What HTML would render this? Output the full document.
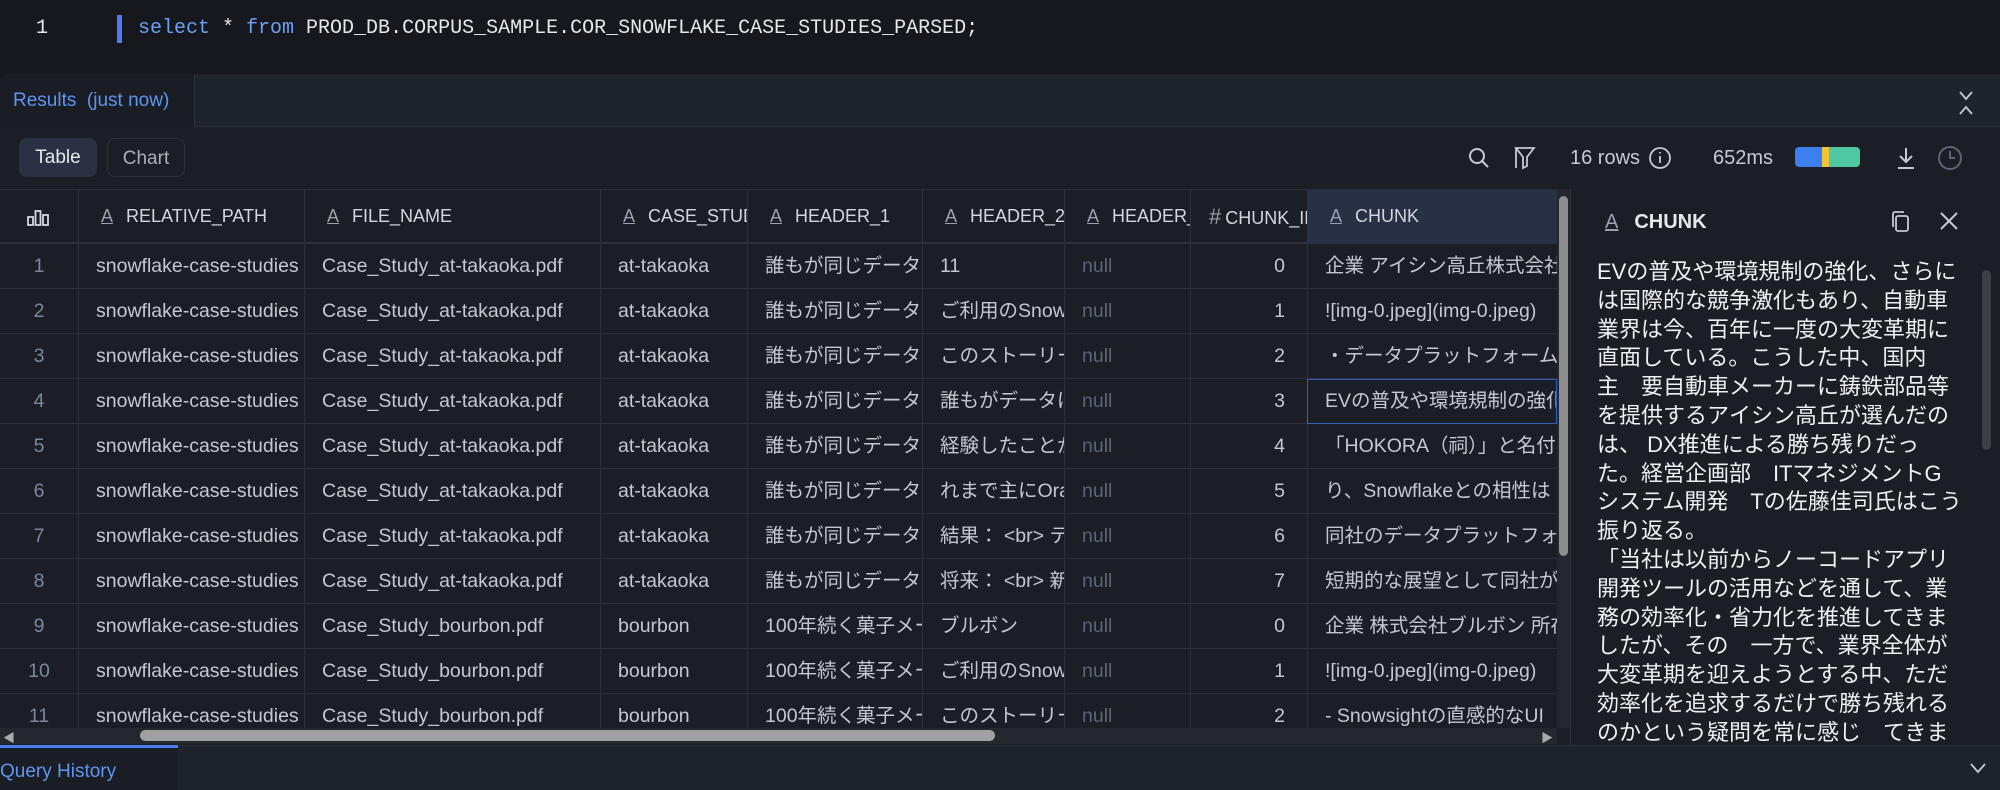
<!DOCTYPE html>
<html><head><meta charset="utf-8">
<style>
*{margin:0;padding:0;box-sizing:border-box}
body{width:2000px;height:790px;overflow:hidden;background:#16181d;font-family:"Liberation Sans","Noto Sans CJK JP",sans-serif;color:#c6cad3;position:relative}
.abs{position:absolute}
.code{left:138px;top:14px;font-family:"Liberation Mono",monospace;font-size:20px;line-height:30px;color:#e6e8ec;white-space:pre}
.kw{color:#6aa0f5}
.panel{left:0;top:74px;width:2000px;height:716px;background:#1b1e25;border-top:1px solid #2a2f3a;border-top-left-radius:10px}
.tabbar{left:0;top:74px;width:2000px;height:53px;background:#1f232b;border-bottom:1px solid #2c313c;border-top-left-radius:10px}
.tab{left:0;top:74px;width:195px;height:53px;background:#1a1d24;border-right:1px solid #2c313c;color:#5e95f2;font-size:19px;line-height:53px;padding-left:13px;border-top-left-radius:10px}
.btn{top:138px;height:39px;border-radius:8px;font-size:19px;line-height:39px;text-align:center}
.hdr{top:189px;height:55px;background:#1b1e25;border-top:1px solid #2c313c;border-bottom:2px solid #2c313c}
.hc{position:absolute;top:189px;height:55px;line-height:55px;font-size:18px;color:#d4d7de;white-space:nowrap;overflow:hidden;border-left:1px solid #2c313c;padding-left:22px}
.ai{display:inline-block;color:#9aa0ad;font-size:18px;text-decoration:underline;margin-right:13px}
.cell{position:absolute;height:45px;line-height:45px;font-size:19.5px;white-space:nowrap;overflow:hidden;border-left:1px solid #2c313c;border-bottom:1px solid #2c313c;padding-left:17px;color:#c3c8d2}
.rn{text-align:center;padding-left:0;color:#7a86a3;border-left:none}
.nl{color:#5c637a}
.num{text-align:right;padding-right:22px;padding-left:0}
.detail{left:1570px;top:189px;width:430px;height:556px;background:#1b1e25;border-left:1px solid #2c313c}
.dtext{left:1597px;top:258px;width:370px;font-size:22px;line-height:28.8px;color:#eef0f3;white-space:nowrap}
.qh{left:0;top:745px;width:2000px;height:45px;background:#1e222a;border-top:1px solid #2c313c}
</style></head><body>
<div class="abs" style="left:36px;top:14px;font-family:'Liberation Mono',monospace;font-size:20px;line-height:30px;color:#e6e8ec">1</div>
<div class="abs" style="left:117px;top:15px;width:5px;height:28px;background:#4a7df0"></div>
<div class="abs code"><span class="kw">select</span> * <span class="kw">from</span> PROD_DB.CORPUS_SAMPLE.COR_SNOWFLAKE_CASE_STUDIES_PARSED;</div>

<div class="abs panel"></div>
<div class="abs tabbar"></div>
<div class="abs tab">Results&nbsp; (just now)</div>
<svg class="abs" style="left:1956px;top:90px" width="20" height="26" viewBox="0 0 20 26" fill="none" stroke="#c6cad3" stroke-width="1.8"><path d="M4 2l6 7 6-7M4 24l6-7 6 7"/></svg>

<div class="abs btn" style="left:19px;width:78px;background:#2a3142;color:#e6e8ec">Table</div>
<div class="abs btn" style="left:107px;width:78px;border:1px solid #2c313c;color:#a9afbb">Chart</div>

<svg class="abs" style="left:1466px;top:145px" width="26" height="26" viewBox="0 0 26 26" fill="none" stroke="#c6cad3" stroke-width="2"><circle cx="11" cy="11" r="7"/><path d="M16 16l6 6"/></svg>
<svg class="abs" style="left:1512px;top:145px" width="26" height="26" viewBox="0 0 26 26" fill="none" stroke="#c6cad3" stroke-width="1.8"><path d="M4 3h18l-7 9v9l-4 2V12z"/><path d="M4 3v20"/></svg>
<div class="abs" style="left:1570px;top:145px;font-size:20px;line-height:26px;color:#c6cad3">16 rows</div>
<svg class="abs" style="left:1647px;top:145px" width="26" height="26" viewBox="0 0 26 26" fill="none" stroke="#c6cad3" stroke-width="1.8"><circle cx="13" cy="13" r="10"/><path d="M13 11v7M13 7v1.5"/></svg>
<div class="abs" style="left:1713px;top:145px;font-size:20px;line-height:26px;color:#c6cad3">652ms</div>
<div class="abs" style="left:1795px;top:147px;width:65px;height:20px;border-radius:4px;overflow:hidden;display:flex"><div style="width:27px;background:#3c7ff0"></div><div style="width:7px;background:#f1c232"></div><div style="flex:1;background:#4fc7a0"></div></div>
<svg class="abs" style="left:1893px;top:145px" width="26" height="26" viewBox="0 0 26 26" fill="none" stroke="#c6cad3" stroke-width="2"><path d="M13 3v14M7 11l6 6 6-6M5 23h16"/></svg>
<svg class="abs" style="left:1936px;top:144px" width="28" height="28" viewBox="0 0 28 28" fill="none" stroke="#5d6475" stroke-width="2"><circle cx="14" cy="14" r="11"/><path d="M14 7v7h5"/></svg>

<div class="abs hdr" style="left:0;width:1570px"></div>
<div class="hc" style="left:0;width:78px;border-left:none;padding-left:26px"><svg width="24" height="20" viewBox="0 0 24 20" style="vertical-align:middle" fill="none" stroke="#d4d7de" stroke-width="1.8"><rect x="2" y="10" width="5" height="8"/><rect x="9.5" y="4" width="5" height="14"/><rect x="17" y="8" width="5" height="10"/></svg></div>
<div class="hc" style="left:78px;width:226px"><span class="ai">A</span>RELATIVE_PATH</div>
<div class="hc" style="left:304px;width:296px"><span class="ai">A</span>FILE_NAME</div>
<div class="hc" style="left:600px;width:147px"><span class="ai">A</span>CASE_STUDY</div>
<div class="hc" style="left:747px;width:175px"><span class="ai">A</span>HEADER_1</div>
<div class="hc" style="left:922px;width:142px"><span class="ai">A</span>HEADER_2</div>
<div class="hc" style="left:1064px;width:126px"><span class="ai">A</span>HEADER_3</div>
<div class="hc" style="left:1190px;width:117px;padding-left:18px"><span style="font-size:22px;color:#9aa0ad;margin-right:4px">#</span>CHUNK_INDEX</div>
<div class="hc" style="left:1307px;width:250px;background:#283044"><span class="ai">A</span>CHUNK</div>

<div id="rows"></div>
<script>
var d=[
["at-takaoka.pdf","at-takaoka","誰もが同じデータ","11",0,"企業 アイシン高丘株式会社"],
["at-takaoka.pdf","at-takaoka","誰もが同じデータ","ご利用のSnowflake",1,"![img-0.jpeg](img-0.jpeg)"],
["at-takaoka.pdf","at-takaoka","誰もが同じデータ","このストーリーは",2,"・データプラットフォーム"],
["at-takaoka.pdf","at-takaoka","誰もが同じデータ","誰もがデータは",3,"EVの普及や環境規制の強化"],
["at-takaoka.pdf","at-takaoka","誰もが同じデータ","経験したことがない",4,"「HOKORA（祠）」と名付け"],
["at-takaoka.pdf","at-takaoka","誰もが同じデータ","れまで主にOracle",5,"り、Snowflakeとの相性は"],
["at-takaoka.pdf","at-takaoka","誰もが同じデータ","結果： &lt;br&gt; テ",6,"同社のデータプラットフォーム"],
["at-takaoka.pdf","at-takaoka","誰もが同じデータ","将来： &lt;br&gt; 新",7,"短期的な展望として同社が"],
["bourbon.pdf","bourbon","100年続く菓子メーカー","ブルボン",0,"企業 株式会社ブルボン 所在地"],
["bourbon.pdf","bourbon","100年続く菓子メーカー","ご利用のSnowflake",1,"![img-0.jpeg](img-0.jpeg)"],
["bourbon.pdf","bourbon","100年続く菓子メーカー","このストーリーは",2,"- Snowsightの直感的なUI"]];
var h="";
for(var i=0;i<d.length;i++){var t=244+45*i,r=d[i];
var cs=[[0,78,"cell rn",i+1],[78,226,"cell","snowflake-case-studies"],[304,296,"cell","Case_Study_"+r[0]],[600,147,"cell",r[1]],[747,175,"cell",r[2]],[922,142,"cell",r[3]],[1064,126,"cell nl","null"],[1190,117,"cell num",r[4]],[1307,250,"cell",r[5]]];
for(var j=0;j<cs.length;j++){var c=cs[j];var ex="";if(i==3&&j==8)ex="outline:1px solid #2f5fbf;outline-offset:-1px;";
h+='<div class="'+c[2]+'" style="left:'+c[0]+'px;top:'+t+'px;width:'+c[1]+'px;'+ex+'">'+c[3]+'</div>';}}
document.getElementById("rows").innerHTML=h;
</script>

<div class="abs" style="left:1557px;top:189px;width:13px;height:539px;background:#24272d"></div>
<div class="abs" style="left:1559px;top:196px;width:9px;height:360px;background:#8e8e8e;border-radius:5px"></div>
<div class="abs" style="left:0;top:728px;width:1557px;height:16px;background:#24272d"></div>
<div class="abs" style="left:140px;top:730px;width:855px;height:11px;background:#a0a0a0;border-radius:6px"></div>
<div class="abs" style="left:3px;top:729px;font-size:12px;color:#aaa">◀</div>
<div class="abs" style="left:1541px;top:729px;font-size:12px;color:#aaa">▶</div>

<div class="abs detail"></div>
<div class="abs" style="left:1605px;top:207px;font-size:20px;line-height:30px;color:#e6e8ec"><span class="ai" style="font-size:20px;margin-right:16px">A</span><b style="font-weight:600">CHUNK</b></div>
<svg class="abs" style="left:1889px;top:209px" width="24" height="26" viewBox="0 0 24 26" fill="none" stroke="#c6cad3" stroke-width="1.8"><rect x="7" y="7" width="12" height="15" rx="2"/><path d="M4 18V5a2 2 0 0 1 2-2h9"/></svg>
<svg class="abs" style="left:1938px;top:210px" width="22" height="22" viewBox="0 0 22 22" fill="none" stroke="#c6cad3" stroke-width="2"><path d="M3 3l16 16M19 3L3 19"/></svg>
<div class="abs dtext">EVの普及や環境規制の強化、さらに<br>は国際的な競争激化もあり、自動車<br>業界は今、百年に一度の大変革期に<br>直面している。こうした中、国内<br>主　要自動車メーカーに鋳鉄部品等<br>を提供するアイシン高丘が選んだの<br>は、 DX推進による勝ち残りだっ<br>た。経営企画部　ITマネジメントG<br>システム開発　Tの佐藤佳司氏はこう<br>振り返る。<br>「当社は以前からノーコードアプリ<br>開発ツールの活用などを通して、業<br>務の効率化・省力化を推進してきま<br>したが、その　一方で、業界全体が<br>大変革期を迎えようとする中、ただ<br>効率化を追求するだけで勝ち残れる<br>のかという疑問を常に感じ　てきま</div>
<div class="abs" style="left:1982px;top:270px;width:9px;height:180px;background:#3a3f4a;border-radius:5px"></div>

<div class="abs qh"></div>
<div class="abs" style="left:0;top:745px;width:178px;height:45px;background:#1a1d24;border-top:3px solid #4a7df0"></div>
<div class="abs" style="left:0;top:758px;font-size:19px;line-height:28px;color:#5e95f2">Query History</div>
<svg class="abs" style="left:1968px;top:760px" width="20" height="16" viewBox="0 0 20 16" fill="none" stroke="#c6cad3" stroke-width="1.8"><path d="M3 4l7 8 7-8"/></svg>
</body></html>
